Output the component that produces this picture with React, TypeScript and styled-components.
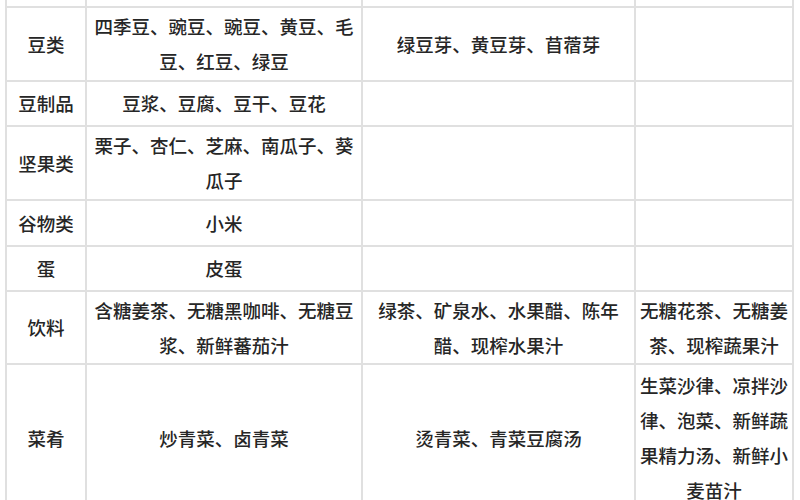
import React from "react";
import styled, { createGlobalStyle } from "styled-components";

// ---------- Data ----------
interface FoodRow {
  label: string;
  cells: [string, string, string];
  height: number;
}

const rows: FoodRow[] = [
  { label: "", cells: ["", "", ""], height: 8 },
  {
    label: "豆类",
    cells: ["四季豆、豌豆、豌豆、黄豆、毛\n豆、红豆、绿豆", "绿豆芽、黄豆芽、苜蓿芽", ""],
    height: 74,
  },
  { label: "豆制品", cells: ["豆浆、豆腐、豆干、豆花", "", ""], height: 45 },
  {
    label: "坚果类",
    cells: ["栗子、杏仁、芝麻、南瓜子、葵\n瓜子", "", ""],
    height: 74,
  },
  { label: "谷物类", cells: ["小米", "", ""], height: 46 },
  { label: "蛋", cells: ["皮蛋", "", ""], height: 45 },
  {
    label: "饮料",
    cells: [
      "含糖姜茶、无糖黑咖啡、无糖豆\n浆、新鲜蕃茄汁",
      "绿茶、矿泉水、水果醋、陈年\n醋、现榨水果汁",
      "无糖花茶、无糖姜\n茶、现榨蔬果汁",
    ],
    height: 73,
  },
  {
    label: "菜肴",
    cells: [
      "炒青菜、卤青菜",
      "烫青菜、青菜豆腐汤",
      "生菜沙律、凉拌沙\n律、泡菜、新鲜蔬\n果精力汤、新鲜小\n麦苗汁",
    ],
    height: 148,
  },
];

// ---------- Styles ----------
const GlobalStyle = createGlobalStyle`
  html, body {
    margin: 0;
    padding: 0;
    background: #ffffff;
    overflow: hidden;
  }
`;

const Page = styled.div`
  width: 800px;
  height: 500px;
  overflow: hidden;
  background: #ffffff;
  font-family: "Noto Sans CJK SC", "Noto Sans", sans-serif;
`;

const Table = styled.div`
  display: flex;
  flex-direction: column;
  margin-left: 5px;
  width: 789px;
  border-left: 2px solid #e0e0e0;
  box-sizing: border-box;
`;

const Row = styled.div<{ $height: number }>`
  display: grid;
  grid-template-columns: 80px 276px 273px 158px;
  height: ${(p) => p.$height}px;
`;

const Cell = styled.div`
  display: flex;
  align-items: center;
  justify-content: center;
  box-sizing: border-box;
  border-right: 2px solid #e0e0e0;
  border-bottom: 2px solid #e0e0e0;
  padding: 0 4px;
  text-align: center;
  white-space: pre-line;
  font-size: 18.5px;
  font-weight: 500;
  line-height: 35px;
  color: #262626;
`;

// ---------- Component ----------
const App: React.FC = () => (
  <Page>
    <GlobalStyle />
    <Table>
      {rows.map((row, i) => (
        <Row key={i} $height={row.height}>
          <Cell>{row.label}</Cell>
          {row.cells.map((text, j) => (
            <Cell key={j}>{text}</Cell>
          ))}
        </Row>
      ))}
    </Table>
  </Page>
);

export default App;
